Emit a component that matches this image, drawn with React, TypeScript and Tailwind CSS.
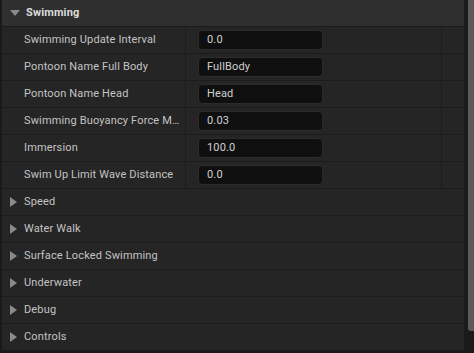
import React from "react";

const props = [
  ["Swimming Update Interval", "0.0"],
  ["Pontoon Name Full Body", "FullBody"],
  ["Pontoon Name Head", "Head"],
  ["Swimming Buoyancy Force M…", "0.03"],
  ["Immersion", "100.0"],
  ["Swim Up Limit Wave Distance", "0.0"],
];

const cats = ["Speed", "Water Walk", "Surface Locked Swimming", "Underwater", "Debug", "Controls"];

function Down() {
  return (
    <svg width="10" height="6" viewBox="0 0 10 6" className="shrink-0">
      <path d="M0 0 H10 L5 6 Z" fill="#8a8a8a" />
    </svg>
  );
}
function Right() {
  return (
    <svg width="7" height="10" viewBox="0 0 7 10" className="shrink-0">
      <path d="M0 0 V10 L7 5 Z" fill="#8a8a8a" />
    </svg>
  );
}

export default function App() {
  return (
    <div
      className="w-[474px] h-[353px] bg-[#1a1a1a] flex overflow-hidden text-[11px] tracking-[0.15px]"
      style={{ fontFamily: "Roboto, 'Noto Sans', sans-serif" }}
    >
      <div className="w-[462px] ml-[2px] flex flex-col">
        <div className="h-[27px] shrink-0 bg-[#2f2f2f] border-b border-[#1c1c1c] flex items-center">
          <div className="w-[24px] flex justify-center pl-[1px]">
            <Down />
          </div>
          <span className="font-bold text-[#dcdcdc]">Swimming</span>
        </div>
        {props.map(([n, v]) => (
          <div key={n} className="h-[27px] shrink-0 bg-[#252525] border-b border-[#1c1c1c] flex">
            <div className="w-[184px] border-r border-[#1c1c1c] flex items-center pl-[22px] text-[#c4c4c4] whitespace-nowrap overflow-hidden">
              {n}
            </div>
            <div className="w-[256px] border-r border-[#1c1c1c] flex items-center pl-[12px]">
              <div className="w-[125px] h-[20px] rounded-[4px] bg-[#0f0f0f] border border-[#2c2c2c] flex items-center pl-[8px] text-[#d2d2d2]">
                {v}
              </div>
            </div>
            <div className="flex-1" />
          </div>
        ))}
        {cats.map((c) => (
          <div key={c} className="h-[27px] shrink-0 bg-[#252525] border-b border-[#1c1c1c] flex items-center">
            <div className="w-[22px] flex justify-center pl-[1px]">
              <Right />
            </div>
            <span className="text-[#c4c4c4]">{c}</span>
          </div>
        ))}
      </div>
      <div className="w-[4px]" />
      <div className="w-[6px] h-[331px] bg-[#5b5b5b] rounded-bl-[3px]" />
    </div>
  );
}
